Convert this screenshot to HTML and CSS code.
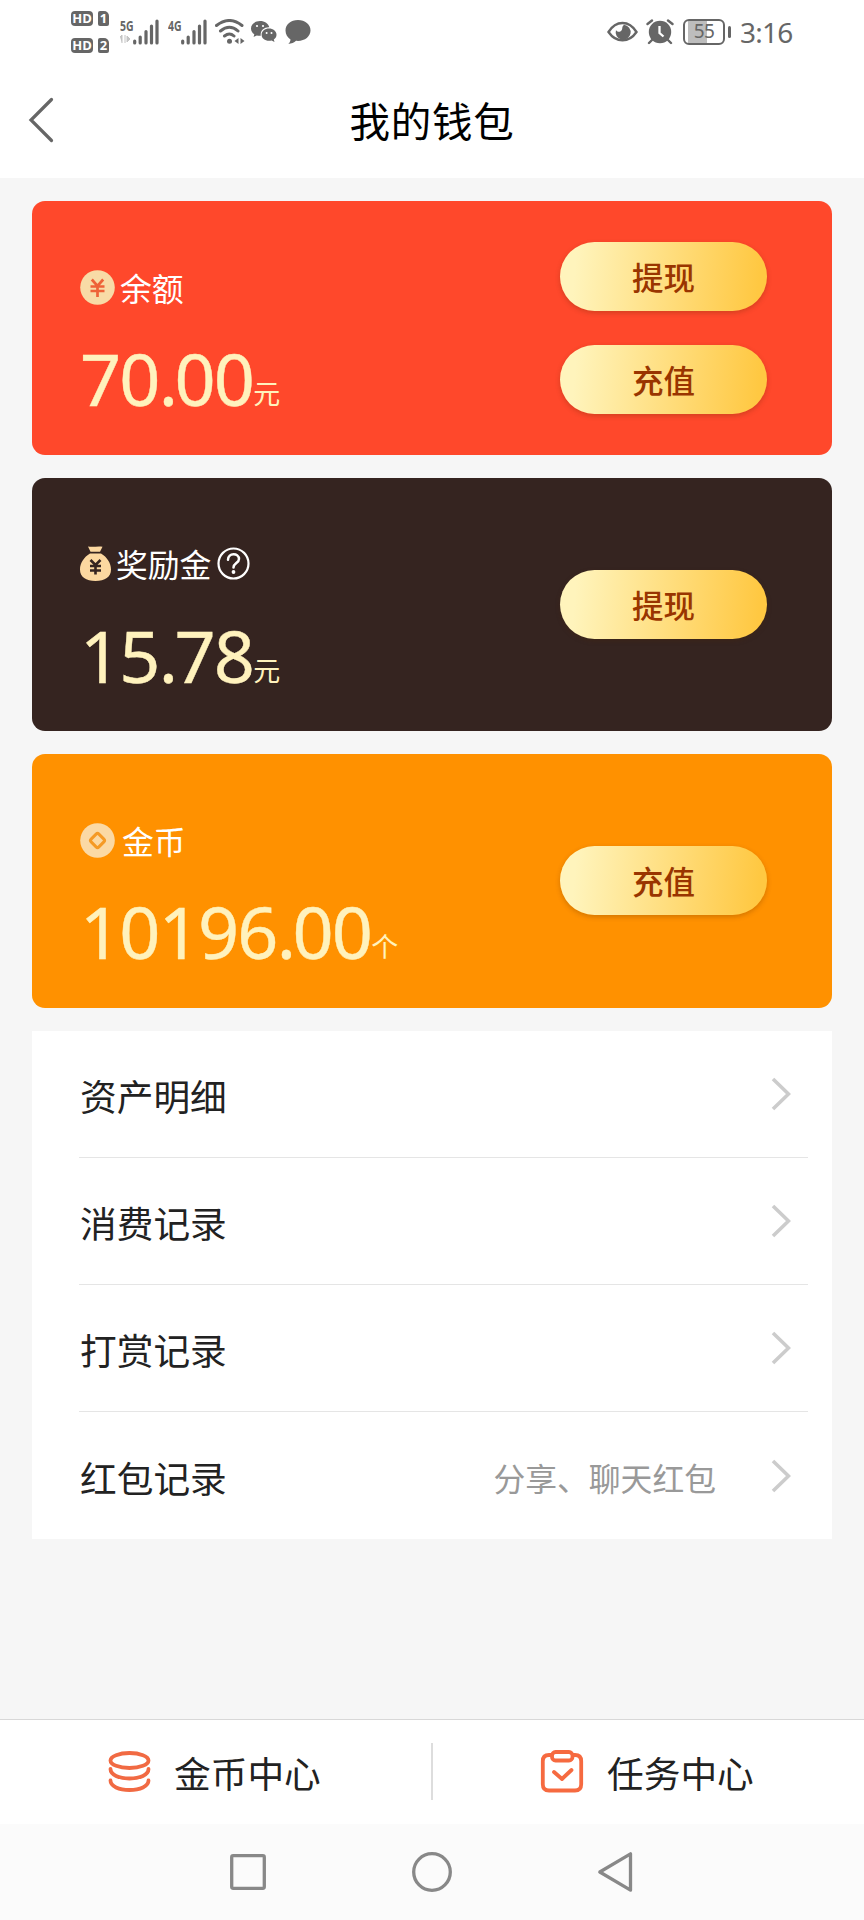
FILE: index.html
```
<!DOCTYPE html>
<html lang="zh-CN">
<head>
<meta charset="utf-8">
<title>我的钱包</title>
<link rel="stylesheet" href="styles.css">
</head>
<body>
<div class="screen">
  <div class="status">
    <div class="hd-col">
      <div class="hd-row"><span class="hd">HD</span><span class="sim">1</span></div>
      <div class="hd-row"><span class="hd">HD</span><span class="sim">2</span></div>
    </div>
    <div class="signal">
      <span class="net">5G</span>
      <svg class="data" width="10" height="8" viewBox="0 0 10 8"><path d="M0 2l2-2v8M5 0v8M7 1v6l3-3z" fill="#c4c4c4" stroke="#c4c4c4"/></svg>
      <svg class="bars" width="26" height="26" viewBox="0 0 26 26"><path d="M1.700 22v2M7.200 18v6M13 12.500v11.500M18.500 7v17M24 2v22" /></svg>
    </div>
    <div class="signal signal-b">
      <span class="net">4G</span>
      <svg class="bars" width="26" height="26" viewBox="0 0 26 26"><path d="M1.700 22v2M7.200 18v6M13 12.500v11.500M18.500 7v17M24 2v22" /></svg>
    </div>
    <svg class="wifi" width="30" height="26" viewBox="0 0 30 26"><g fill="none" stroke="#666" stroke-width="3" stroke-linecap="round"><path d="M1.500 6.500Q14.500-3.500 27 6.500M5.500 12Q14.500 4.500 23 12M9.500 17Q14.500 13 19 17"/></g><circle cx="14.500" cy="22.200" r="2.500" fill="#666"/><path d="M19.500 22l4-3v6zM29.500 22l-4-3v6z" fill="#666"/></svg>
    <svg class="wechat" width="26" height="22" viewBox="0 0 26 22"><path d="M9 0C4 0 0 3.300 0 7.500c0 2.400 1.300 4.500 3.300 5.800L2.600 16l3.200-1.600c1.300.4 2.600.5 4 .4-.9-5.200 3.600-8.900 8.500-8.500C17.500 2.700 13.700 0 9 0z" fill="#666"/><path d="M18 7.600c-4.200 0-7.400 2.700-7.400 6.100s3.200 6.100 7.400 6.100c.9 0 1.800-.1 2.600-.4l2.900 1.500-.7-2.500c1.700-1.100 2.700-2.800 2.700-4.700 0-3.400-3.400-6.100-7.500-6.100z" fill="#666"/><g fill="#fff"><circle cx="6" cy="5" r="1.100"/><circle cx="12" cy="5" r="1.100"/><circle cx="15.600" cy="12" r="1"/><circle cx="20.500" cy="12" r="1"/></g></svg>
    <svg class="bubble" width="26" height="25" viewBox="0 0 26 25"><path d="M13 0C5.800 0 .5 4.500.5 10.500c0 3.800 2 7 5 8.900 0 1.900-1 3.400-2.300 4.600 3.300-.2 6-1.600 7.800-3.200 8 .9 14.500-4 14.500-10.300C25.500 4.500 20 0 13 0z" fill="#666"/></svg>
    <span class="spacer"></span>
    <svg class="eye" width="31" height="22" viewBox="0 0 31 22"><path d="M1.500 11C9-1 22-1 29.500 11 22 22 9 22 1.500 11z" fill="none" stroke="#666" stroke-width="2.400"/><path d="M17 3.800a7.500 7.500 0 1 1-8 5.200c1 2.500 5 2.500 6-.500.6-1.700-.1-3 2-4.700z" fill="#666"/></svg>
    <svg class="alarm" width="28" height="26" viewBox="0 0 28 26"><circle cx="14" cy="13" r="11.200" fill="#666"/><path d="M1.500 5L6 1.500M26.500 5L22 1.500M6 21l-3 3M22 21l3 3" stroke="#666" stroke-width="2.400" stroke-linecap="round"/><path d="M13.500 7v7l4 3.500" fill="none" stroke="#fff" stroke-width="2.300"/></svg>
    <div class="battery"><span>55</span></div><i class="cap"></i>
    <span class="time">3:16</span>
  </div>

  <header class="header">
    <svg class="back" width="26" height="46" viewBox="0 0 26 46"><path d="M23.500 2.500L3 23l20.500 20.500" fill="none" stroke="#666" stroke-width="3.200" stroke-linecap="round"/></svg>
    <h1>我的钱包</h1>
  </header>

  <main class="content">
    <section class="card red">
      <div class="info">
        <div class="label">
          <svg width="35" height="35" viewBox="0 0 35 35"><circle cx="17.500" cy="17.500" r="17.300" fill="#f8dba6"/><path d="M11.800 9.500l5.700 6.500 5.700-6.500M10.500 16.500h14M10.500 21h14M17.500 16v11" fill="none" stroke="#ee6238" stroke-width="2.700"/></svg>
          <span class="gap-6">余额</span>
        </div>
        <div class="amount">70<span class="dot">.</span>00<small>元</small></div>
      </div>
      <div class="actions"><button>提现</button><button>充值</button></div>
    </section>

    <section class="card brown">
      <div class="info">
        <div class="label">
          <svg width="31" height="35" viewBox="0 0 31 35"><path d="M8 .5c5 1 10-.7 14.500.3l-2.500 5H10.500zM10 7.500h11C27 11 31 17 31 23.500 31 31 25 35 15.500 35S0 31 0 23.500C0 17 4 11 10 7.500z" fill="#fcd8a0"/><path d="M10.500 14l5 5 5-5M10 20h11M10 24.500h11M15.500 19v9.500" fill="none" stroke="#352420" stroke-width="2.600"/></svg>
          <span class="gap-5">奖励金</span>
          <svg class="help" width="33" height="33" viewBox="0 0 33 33"><circle cx="16.500" cy="16.500" r="15" fill="none" stroke="#fff" stroke-width="2.200"/><path d="M11 12.800c0-7.500 11-7.200 11-.8 0 4-5.500 4.200-5.500 8.500" fill="none" stroke="#fff" stroke-width="2.500" stroke-linecap="round"/><circle cx="16.500" cy="25" r="1.900" fill="#fff"/></svg>
        </div>
        <div class="amount">15<span class="dot">.</span>78<small>元</small></div>
      </div>
      <div class="actions"><button>提现</button></div>
    </section>

    <section class="card orange">
      <div class="info">
        <div class="label">
          <svg width="35" height="35" viewBox="0 0 35 35"><circle cx="17.500" cy="17.500" r="17.300" fill="#fbd9a4"/><rect x="12" y="12" width="11" height="11" rx="2" transform="rotate(45 17.500 17.500)" fill="#fbd9a4" stroke="#f59a25" stroke-width="3"/></svg>
          <span class="gap-7">金币</span>
        </div>
        <div class="amount">10196<span class="dot">.</span>00<small>个</small></div>
      </div>
      <div class="actions"><button>充值</button></div>
    </section>

    <ul class="list">
      <li><span>资产明细</span><svg class="arrow" viewBox="0 0 20 34"><path d="M2 2l15.500 15L2 32"/></svg></li>
      <li><span>消费记录</span><svg class="arrow" viewBox="0 0 20 34"><path d="M2 2l15.500 15L2 32"/></svg></li>
      <li><span>打赏记录</span><svg class="arrow" viewBox="0 0 20 34"><path d="M2 2l15.500 15L2 32"/></svg></li>
      <li><span>红包记录</span><em>分享、聊天红包</em><svg class="arrow" viewBox="0 0 20 34"><path d="M2 2l15.500 15L2 32"/></svg></li>
    </ul>
  </main>

  <footer class="footer">
    <a class="tab">
      <svg width="44" height="44" viewBox="0 0 44 44"><g fill="none" stroke="#f16a43" stroke-width="3.800" stroke-linecap="round"><ellipse cx="22.500" cy="10.500" rx="19" ry="7.500"/><path d="M3.500 19c0 5.800 8.500 9.500 19 9.500s19-3.700 19-9.500M3.500 30.500c0 5.800 8.500 9.500 19 9.500s19-3.700 19-9.500"/></g></svg>
      <span>金币中心</span>
    </a>
    <i class="split"></i>
    <a class="tab">
      <svg width="44" height="44" viewBox="0 0 44 44"><g fill="none" stroke="#f66a40" stroke-width="3.800" stroke-linejoin="round" stroke-linecap="round"><path d="M12 5H9q-6.200 0-6.200 6.200v23q0 6.300 6.200 6.300h26q6.200 0 6.200-6.300v-23Q41.200 5 35 5h-2"/><rect x="12" y="2" width="20.500" height="8.500" rx="3.500"/><path d="M14 22l8 7L31.500 20"/></g></svg>
      <span>任务中心</span>
    </a>
  </footer>

  <nav class="nav">
    <svg width="38" height="40" viewBox="0 0 38 40"><rect x="2.700" y="3.700" width="32.600" height="32.600" rx="1.500"/></svg>
    <svg width="42" height="42" viewBox="0 0 42 42"><circle cx="21" cy="21" r="18.300"/></svg>
    <svg width="38" height="42" viewBox="0 0 38 42"><path d="M33.500 2.800v36.400L2.800 21z"/></svg>
  </nav>
</div>
</body>
</html>
```
FILE: styles.css
```
* { box-sizing: border-box; }

body {
  margin: 0;
  background: #f6f6f6;
  font-family: "Noto Sans CJK SC", sans-serif;
  color: #222;
}

.screen {
  width: 864px;
  height: 1920px;
  display: flex;
  flex-direction: column;
}

/* status bar */
.status {
  height: 64px;
  flex: none;
  background: #fff;
  display: flex;
  align-items: center;
  padding: 0 72px 0 71px;
  color: #666;
}
.hd-col { display: flex; flex-direction: column; gap: 12px; width: 40px; }
.hd-row { display: flex; gap: 5px; }
.hd, .sim {
  display: block;
  height: 15px;
  border-radius: 4px;
  background: #666;
  color: #fff;
  font: 700 13px/15px "Open Sans", sans-serif;
  text-align: center;
}
.hd { width: 22px; }
.sim { width: 11px; border-radius: 2px 5px 2px 2px; }
.signal { display: grid; grid-template-columns: 13px 26px; height: 26px; margin-left: 9px; }
.signal-b { margin-left: 9px; }
.net { font: 700 15px/13px "Open Sans", sans-serif; transform: scaleX(.7); transform-origin: 0 0; width: 18px; }
.data { grid-column: 1; grid-row: 2; }
.bars { grid-column: 2; grid-row: 1 / 3; fill: none; stroke: #666; stroke-width: 3.200; stroke-linecap: round; }
.wifi { margin-left: 8px; }
.wechat { margin-left: 6px; }
.bubble { margin-left: 8px; }
.spacer { flex: 1; }
.alarm { margin-left: 8px; }
.battery {
  width: 42px;
  height: 26px;
  margin-left: 9px;
  border: 2.500px solid #666;
  border-radius: 6px;
  background: linear-gradient(90deg, #fff 3px, #bdbdbd 3px, #bdbdbd 22px, #fff 22px);
  font: 19px/21px "Noto Sans", sans-serif;
  text-align: center;
}
.battery span { letter-spacing: -.5px; }
.cap { width: 3px; height: 12px; margin-left: 3px; border-radius: 2px; background: #666; }
.time { margin-left: 9px; width: 52px; font: 28px/64px "Noto Sans", sans-serif; letter-spacing: -.8px; white-space: nowrap; }

/* title bar */
.header {
  height: 114px;
  flex: none;
  background: #fff;
  display: grid;
  grid-template-columns: 60px 1fr 60px;
  align-items: center;
  padding-bottom: 3px;
}
.back { margin-left: 28px; }
h1 { margin: 0; font-size: 40.500px; letter-spacing: .8px; line-height: 56px; font-weight: 400; text-align: center; color: #000; }

/* balance cards */
.content { flex: 1; padding: 23px 32px 0; }
.card {
  height: 253.500px;
  margin-bottom: 23px;
  border-radius: 13px;
  padding: 0 65px 0 48px;
  display: flex;
  justify-content: space-between;
  align-items: center;
}
.red { background: #ff482b; }
.brown { background: #352420; }
.orange { background: #ff9100; }
.info { align-self: flex-start; padding-top: 62px; }
.label { height: 48px; display: flex; align-items: center; font-size: 31.800px; line-height: 46px; color: #fff; }
.label span { padding-bottom: 1px; }
.gap-5 { margin-left: 5px; }
.gap-6 { margin-left: 5px; }
.gap-7 { margin-left: 7px; }
.help { margin-left: 6px; }
.amount {
  margin-top: 17px;
  height: 100px;
  font: 72px/100px "Noto Sans", "Noto Sans CJK SC", sans-serif;
  letter-spacing: -1.850px;
  color: #fff2bd;
  -webkit-text-stroke: .4px #fff2bd;
  white-space: nowrap;
}
.dot { letter-spacing: -3.500px; }
.amount small { font: 27px/40px "Noto Sans CJK SC", sans-serif; letter-spacing: 0; vertical-align: 2.500px; -webkit-text-stroke: 0; }
.actions { display: flex; flex-direction: column; gap: 34.500px; }
button {
  width: 207px;
  height: 69px;
  padding: 0 0 1px;
  border: 0;
  border-radius: 35px;
  background: linear-gradient(95deg, #fff4bc 8%, #ffc842 95%);
  box-shadow: 0 2px 5px rgba(80, 40, 0, .25);
  color: #993500;
  font: 500 31.500px/68px "Noto Sans CJK SC", sans-serif;
}

/* record list */
.list { list-style: none; margin: 0; padding: 0 24px 0 47px; background: #fff; height: 508.500px; }
.list li {
  height: 127.200px;
  display: flex;
  align-items: center;
  padding: 1px 17px 0 1px;
  border-bottom: 1px solid #e5e5e5;
  font-size: 36.700px;
}
.list li:last-child { border-bottom: 0; }
.list li span { flex: 1; padding-top: 1px; }
.list em { font-style: normal; font-size: 31.800px; color: #999; padding-top: 1px; margin-right: 55px; }
.arrow { width: 20px; height: 34px; fill: none; stroke: #ccc; stroke-width: 3.600; }

/* bottom tabs */
.footer { height: 105.500px; flex: none; display: flex; align-items: center; background: #fff; border-top: 1px solid #d8d8d8; }
.tab { flex: 1; display: flex; align-items: center; font-size: 36.700px; line-height: 54px; padding-left: 107px; }
.tab span { margin-left: 23px; padding-top: 1px; }
.split { width: 2px; height: 57px; background: #ddd; }

/* system navigation */
.nav { height: 96px; flex: none; display: flex; justify-content: center; align-items: center; gap: 144px; padding: 0 1px 1px 0; background: #fbfbfb; }
.nav svg { fill: none; stroke: #888; stroke-width: 3.300; stroke-linejoin: round; }
```
